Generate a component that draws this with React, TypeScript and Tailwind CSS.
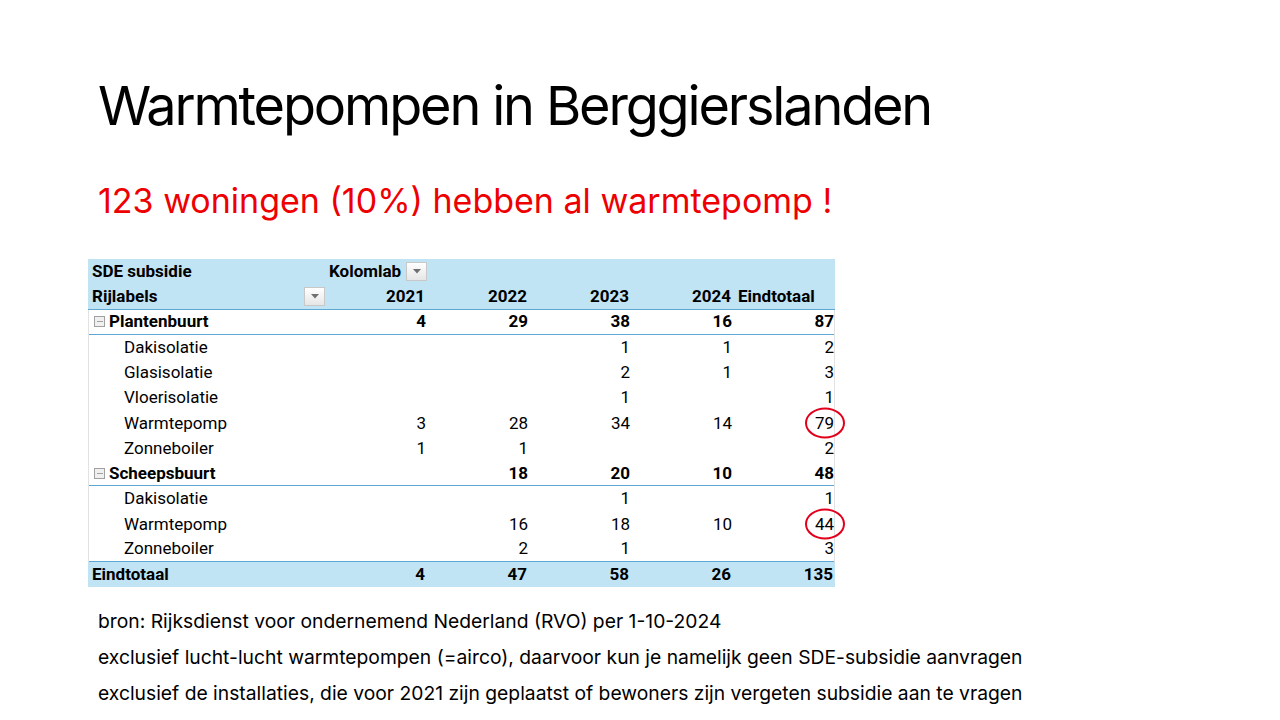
import React from "react";

type Row = {
  label: string;
  kind: "group" | "item";
  v: (number | null)[];
  circle?: boolean;
  line?: boolean;
};

const rows: Row[] = [
  { label: "Plantenbuurt", kind: "group", v: [4, 29, 38, 16, 87], line: true },
  { label: "Dakisolatie", kind: "item", v: [null, null, 1, 1, 2] },
  { label: "Glasisolatie", kind: "item", v: [null, null, 2, 1, 3] },
  { label: "Vloerisolatie", kind: "item", v: [null, null, 1, null, 1] },
  { label: "Warmtepomp", kind: "item", v: [3, 28, 34, 14, 79], circle: true },
  { label: "Zonneboiler", kind: "item", v: [1, 1, null, null, 2] },
  { label: "Scheepsbuurt", kind: "group", v: [null, 18, 20, 10, 48], line: true },
  { label: "Dakisolatie", kind: "item", v: [null, null, 1, null, 1] },
  { label: "Warmtepomp", kind: "item", v: [null, 16, 18, 10, 44], circle: true },
  { label: "Zonneboiler", kind: "item", v: [null, 2, 1, null, 3] },
];

const cols = "grid grid-cols-[237px_102px_102px_102px_102px_102px] h-[25.25px] items-center";

function DropBtn() {
  return (
    <span className="inline-flex h-[19px] w-[21px] shrink-0 items-center justify-center border border-[#c8c8c8] bg-gradient-to-b from-white to-[#e6e6e6]">
      <svg width="8" height="5" viewBox="0 0 8 5">
        <path d="M0 0h8L4 4.5z" fill="#707070" />
      </svg>
    </span>
  );
}

function Collapse() {
  return (
    <span className="mr-[4px] inline-flex h-[11px] w-[11px] items-center justify-center border border-[#a0a0a0] bg-[#f0f0f0]">
      <span className="h-px w-[6px] bg-[#a0a0a0]" />
    </span>
  );
}

function PivotTable() {
  return (
    <div className="w-[747px] text-[17px] leading-none text-black [font-family:Roboto,'Liberation_Sans',sans-serif]">
      <div className="bg-[#c1e4f5]">
        <div className={cols}>
          <div className="pl-[4px] font-bold">SDE subsidie</div>
          <div className="flex items-center justify-between pl-[4px] font-bold">
            <span className="whitespace-nowrap">Kolomlab</span>
            <DropBtn />
          </div>
        </div>
        <div className={`${cols} border-b border-[#5ea7d2]`}>
          <div className="flex items-center justify-between pl-[4px] font-bold">
            <span>Rijlabels</span>
            <DropBtn />
          </div>
          {["2021", "2022", "2023", "2024"].map((y) => (
            <div key={y} className="pr-[2px] text-right font-bold">{y}</div>
          ))}
          <div className="pl-[5px] font-bold whitespace-nowrap">Eindtotaal</div>
        </div>
      </div>
      <div className="border-x border-[#e2e2e2]">
        {rows.map((r, i) => (
          <div
            key={i}
            className={`${cols} ${r.line || i === rows.length - 1 ? "border-b border-[#5ea7d2]" : ""}`}
          >
            {r.kind === "group" ? (
              <div className="flex items-center pl-[5px] font-bold">
                <Collapse />
                {r.label}
              </div>
            ) : (
              <div className="pl-[35px]">{r.label}</div>
            )}
            {r.v.map((n, j) => (
              <div
                key={j}
                className={`relative pr-[2px] text-right ${r.kind === "group" ? "font-bold" : ""}`}
              >
                {n ?? ""}
                {r.circle && j === 4 && (
                  <span className="absolute right-[-9px] top-1/2 h-[31px] w-[40px] -translate-y-1/2 rounded-[50%] border-2 border-[#e3001b]" />
                )}
              </div>
            ))}
          </div>
        ))}
      </div>
      <div className={`${cols} bg-[#c1e4f5] font-bold`}>
        <div className="pl-[4px]">Eindtotaal</div>
        {[4, 47, 58, 26, 135].map((n, j) => (
          <div key={j} className="pr-[2px] text-right">{n}</div>
        ))}
      </div>
    </div>
  );
}

export default function App() {
  return (
    <div className="h-[720px] w-[1280px] overflow-hidden bg-white [font-family:Inter,'Open_Sans',sans-serif]">
      <div className="flex flex-col pl-[98px] pt-[74px]">
        <h1 className="text-[54px] leading-[64px] font-normal tracking-[-0.04em] text-black">
          Warmtepompen in Berggierslanden
        </h1>
        <p className="mt-[42px] text-[34px] leading-[42px] text-[#ee0000]">
          123 woningen (10%) hebben al warmtepomp !
        </p>
        <div className="mt-[37px] -ml-[10px]">
          <PivotTable />
        </div>
        <div className="mt-[23px] flex flex-col gap-[13px] text-[19.3px] leading-[23px] text-black">
          <p>bron: Rijksdienst voor ondernemend Nederland (RVO) per 1-10-2024</p>
          <p>exclusief lucht-lucht warmtepompen (=airco), daarvoor kun je namelijk geen SDE-subsidie aanvragen</p>
          <p>exclusief de installaties, die voor 2021 zijn geplaatst of bewoners zijn vergeten subsidie aan te vragen</p>
        </div>
      </div>
    </div>
  );
}
